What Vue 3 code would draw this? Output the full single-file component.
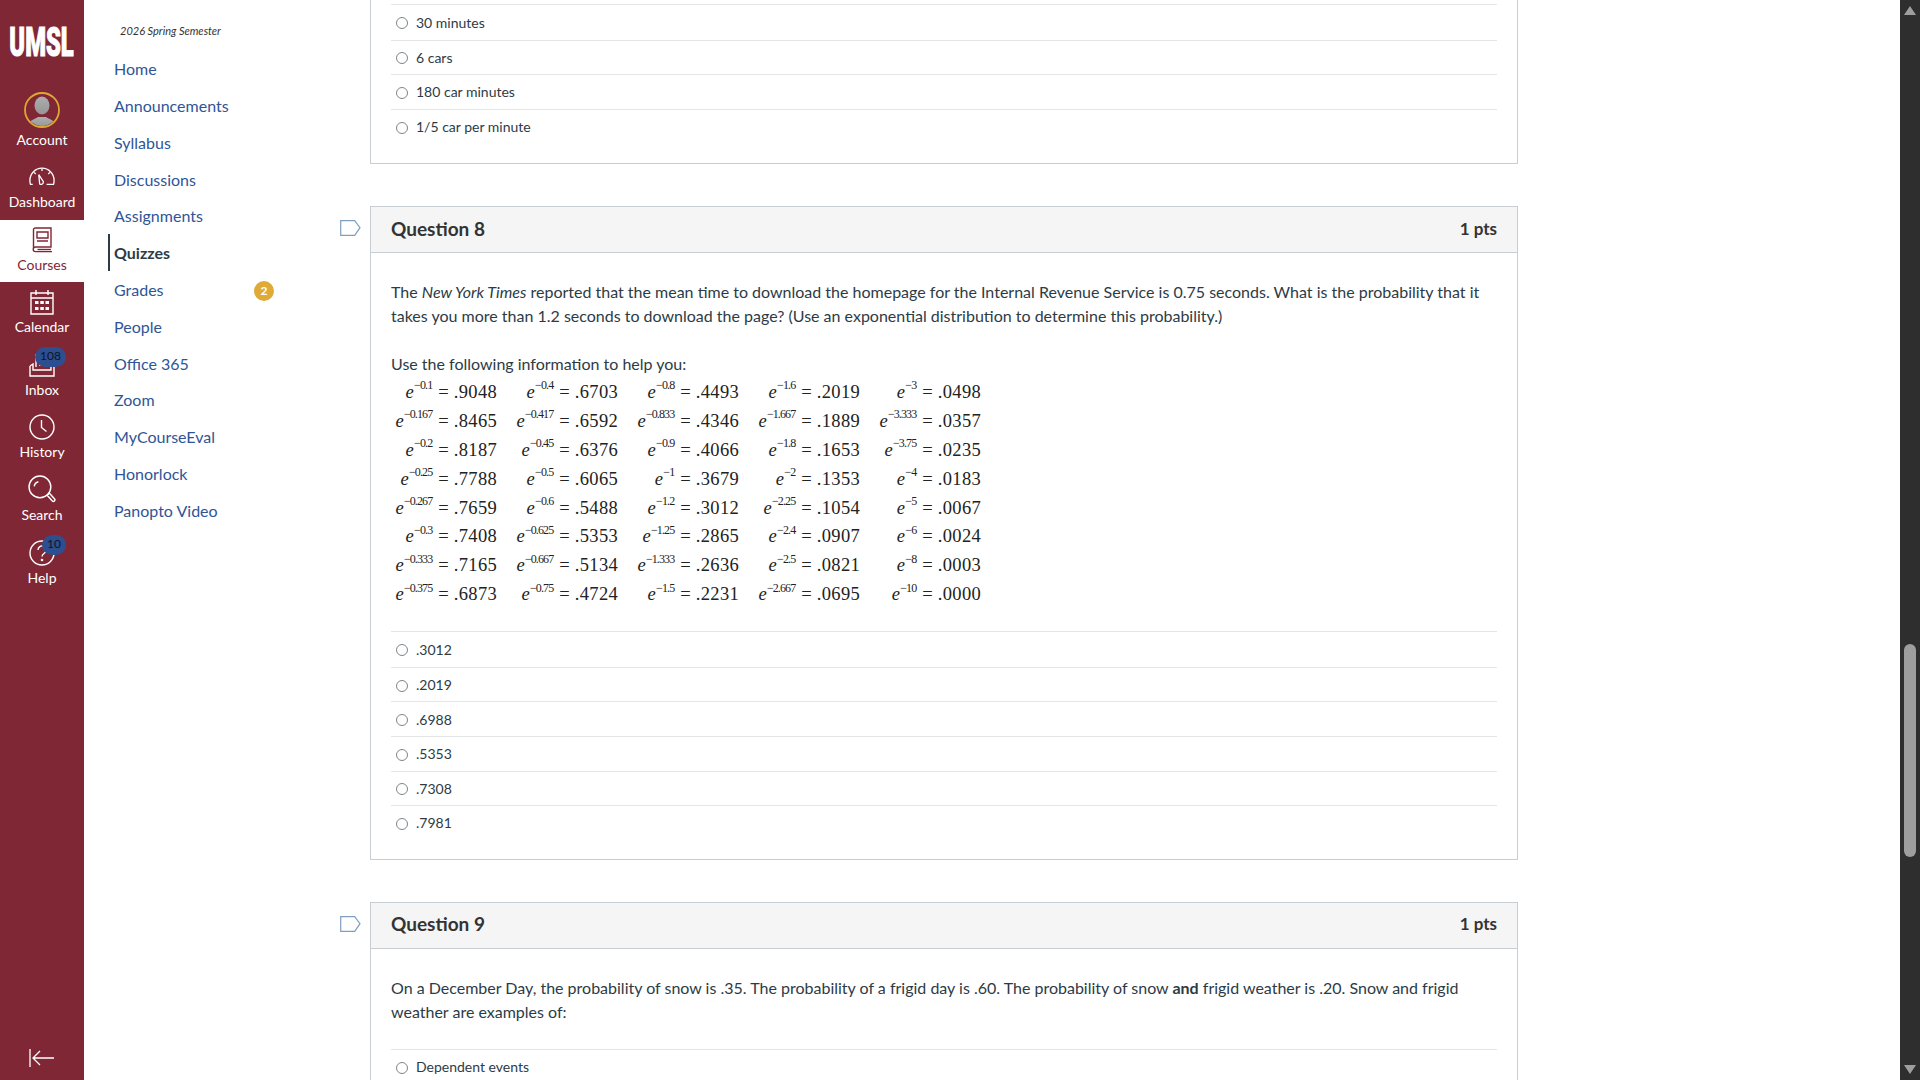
<script setup>
const rail = [
  { label: 'Account', icon: 'account' },
  { label: 'Dashboard', icon: 'dashboard' },
  { label: 'Courses', icon: 'courses', active: true },
  { label: 'Calendar', icon: 'calendar' },
  { label: 'Inbox', icon: 'inbox', badge: '108' },
  { label: 'History', icon: 'history' },
  { label: 'Search', icon: 'search' },
  { label: 'Help', icon: 'help', badge: '10' },
]
const nav = ['Home', 'Announcements', 'Syllabus', 'Discussions', 'Assignments', 'Quizzes', 'Grades', 'People', 'Office 365', 'Zoom', 'MyCourseEval', 'Honorlock', 'Panopto Video']
const q8Answers = ['.3012', '.2019', '.6988', '.5353', '.7308', '.7981']
const topAnswers = ['30 minutes', '6 cars', '180 car minutes', '1/5 car per minute']
const rows = [
  [['0.1', '.9048'], ['0.4', '.6703'], ['0.8', '.4493'], ['1.6', '.2019'], ['3', '.0498']],
  [['0.167', '.8465'], ['0.417', '.6592'], ['0.833', '.4346'], ['1.667', '.1889'], ['3.333', '.0357']],
  [['0.2', '.8187'], ['0.45', '.6376'], ['0.9', '.4066'], ['1.8', '.1653'], ['3.75', '.0235']],
  [['0.25', '.7788'], ['0.5', '.6065'], ['1', '.3679'], ['2', '.1353'], ['4', '.0183']],
  [['0.267', '.7659'], ['0.6', '.5488'], ['1.2', '.3012'], ['2.25', '.1054'], ['5', '.0067']],
  [['0.3', '.7408'], ['0.625', '.5353'], ['1.25', '.2865'], ['2.4', '.0907'], ['6', '.0024']],
  [['0.333', '.7165'], ['0.667', '.5134'], ['1.333', '.2636'], ['2.5', '.0821'], ['8', '.0003']],
  [['0.375', '.6873'], ['0.75', '.4724'], ['1.5', '.2231'], ['2.667', '.0695'], ['10', '.0000']],
]
const cells = rows.flat()
</script>

<template>
  <div class="app">
    <aside class="rail">
      <div class="logo"><span>UMSL</span></div>
      <a v-for="item in rail" :key="item.label" class="rail-item" :class="{ active: item.active }">
        <span class="rail-icon">
          <svg v-if="item.icon === 'account'" class="avatar" viewBox="0 0 36 36">
            <defs>
              <clipPath id="avc"><circle cx="18" cy="18" r="16" /></clipPath>
              <linearGradient id="avg" x1="0" y1="0" x2="0" y2="1"><stop offset="0" stop-color="#adadad" /><stop offset="1" stop-color="#969696" /></linearGradient>
            </defs>
            <g clip-path="url(#avc)" fill="url(#avg)">
              <ellipse cx="18" cy="13.500" rx="7.500" ry="9" />
              <path d="M2 36c1-7 9-9 12-11h8c3 2 11 4 12 11z" />
            </g>
            <circle cx="18" cy="18" r="17" fill="none" stroke="#dca834" stroke-width="1.800" />
          </svg>
          <svg v-else-if="item.icon === 'dashboard'" viewBox="0 0 28 22" class="ic">
            <path d="M4 19H1.600C1 17.700 1 16 1 14.500A13 13 0 0 1 27 14.500C27 16 27 17.700 26.400 19H19" />
            <path d="M10.500 8.500l5 7.500a2.600 2.600 0 0 1-4 2.500z" />
            <path d="M14 2v2.500M5.500 6l1.700 1.700M22.500 6l-1.700 1.700" />
          </svg>
          <svg v-else-if="item.icon === 'courses'" viewBox="0 0 24 26" class="ic">
            <path d="M3.500 21V2.800A1.800 1.800 0 0 1 5.300 1H21v19H5.500a2.300 2.300 0 0 0 0 4.600H22" />
            <path d="M7 5h11v6H7zM7 14h11" />
            <path d="M7.500 22.500H21" />
          </svg>
          <svg v-else-if="item.icon === 'calendar'" viewBox="0 0 24 26" class="ic">
            <path d="M1 4h22v21H1zM1 9h22M6 1v5M18 1v5" />
            <path class="solid" d="M5 12h3.500v3H5zM10.300 12h3.500v3h-3.500zM15.500 12H19v3h-3.500zM5 18h3.500v3H5zM10.300 18h3.500v3h-3.500zM15.500 18H19v3h-3.500z" />
          </svg>
          <svg v-else-if="item.icon === 'inbox'" viewBox="0 0 26 24" class="ic">
            <path d="M1 13v10h24V13l-3-2M1 13l3-2v6h18v-6" />
            <path d="M7 14V2h12v12M10 8h6M10 12h6" />
          </svg>
          <svg v-else-if="item.icon === 'history'" viewBox="0 0 26 26" class="ic">
            <circle cx="13" cy="13" r="12" />
            <path d="M12.500 6v7.500l5 4" />
          </svg>
          <svg v-else-if="item.icon === 'search'" viewBox="0 0 27 28" class="ic big">
            <circle cx="11.500" cy="11.500" r="10.500" />
            <path d="M18.500 19.500l2-2 5 5.500a1.400 1.400 0 0 1-2 2z" />
            <path d="M6 11a5.500 5.500 0 0 1 4-4.500" />
          </svg>
          <svg v-else viewBox="0 0 26 26" class="ic">
            <circle cx="13" cy="13" r="12" />
            <path d="M9 10a4 4 0 1 1 6.500 3c-1.500 1-2.500 2-2.500 3.500" />
            <circle class="solid" cx="13" cy="20" r="1.300" />
          </svg>
          <span v-if="item.badge" class="rail-badge" :class="'b' + item.badge">{{ item.badge }}</span>
        </span>
        <span class="rail-label">{{ item.label }}</span>
      </a>
      <div class="collapse">
        <svg viewBox="0 0 26 20" width="26" height="20">
          <path d="M1 1v18M25 10H4M11 3l-7 7 7 7" fill="none" stroke="#fff" stroke-width="1.300" />
        </svg>
      </div>
    </aside>

    <nav class="course-nav">
      <div class="semester">2026 Spring Semester</div>
      <ul>
        <li v-for="name in nav" :key="name" :class="{ current: name === 'Quizzes' }">
          <span>{{ name }}</span>
          <b v-if="name === 'Grades'" class="count">2</b>
        </li>
      </ul>
    </nav>

    <main class="main">
      <section class="q-row">
        <div class="card card-clipped">
          <div class="answers">
            <label v-for="a in topAnswers" :key="a" class="answer"><i class="radio"></i>{{ a }}</label>
          </div>
        </div>
      </section>

      <section class="q-row">
        <div class="tag-slot">
          <svg viewBox="0 0 21 16" width="21" height="16"><path d="M.7.7h14l5.300 7-5.300 7.600H.7z" fill="#fff" stroke="#7f9fc0" stroke-width="1.200" /></svg>
        </div>
        <div class="card">
          <header class="head"><h2>Question 8</h2><strong>1 pts</strong></header>
          <div class="body">
            <p>The <em>New York Times</em> reported that the mean time to download the homepage for the Internal Revenue Service is 0.75 seconds. What is the probability that it takes you more than 1.2 seconds to download the page? (Use an exponential distribution to determine this probability.)</p>
            <p class="use">Use the following information to help you:</p>
            <div class="table">
              <span v-for="c in cells" :key="c[0]" class="cell"><i>e</i><sup>−{{ c[0] }}</sup> = {{ c[1] }}</span>
            </div>
            <div class="answers">
              <label v-for="a in q8Answers" :key="a" class="answer"><i class="radio"></i>{{ a }}</label>
            </div>
          </div>
        </div>
      </section>

      <section class="q-row">
        <div class="tag-slot">
          <svg viewBox="0 0 21 16" width="21" height="16"><path d="M.7.7h14l5.300 7-5.300 7.600H.7z" fill="#fff" stroke="#7f9fc0" stroke-width="1.200" /></svg>
        </div>
        <div class="card">
          <header class="head"><h2>Question 9</h2><strong>1 pts</strong></header>
          <div class="body">
            <p>On a December Day, the probability of snow is .35. The probability of a frigid day is .60. The probability of snow <b>and</b> frigid weather is .20. Snow and frigid weather are examples of:</p>
            <div class="answers a9">
              <label class="answer"><i class="radio"></i>Dependent events</label>
            </div>
          </div>
        </div>
      </section>
    </main>

    <div class="scrollbar">
      <span class="arrow up"></span>
      <span class="thumb"></span>
      <span class="arrow down"></span>
    </div>
  </div>
</template>

<style>
html, body { margin: 0; overflow: hidden; }
</style>

<style scoped>
.app {
  display: flex;
  width: 1920px;
  height: 1080px;
  overflow: hidden;
  background: #fff;
  font-family: Lato, "Liberation Sans", sans-serif;
  color: #2d3b45;
}
.rail {
  width: 84px;
  flex: none;
  background: #802735;
  color: #fff;
  display: flex;
  flex-direction: column;
}
.logo {
  height: 94.500px;
  flex: none;
  display: flex;
  justify-content: center;
  align-items: flex-start;
  padding-top: 21px;
  box-sizing: border-box;
  overflow: hidden;
}
.logo span {
  font-family: Roboto, sans-serif;
  font-weight: 900;
  font-size: 41px;
  line-height: 43px;
  transform: scaleX(.58);
  -webkit-text-stroke: 1.100px #fff;
}
.rail-item {
  height: 62.600px;
  display: flex;
  flex-direction: column;
  align-items: center;
  flex: none;
}
.rail-item.active { background: #fff; color: #802735; }
.rail-icon {
  position: relative;
  height: 26px;
  margin-top: 7px;
  display: flex;
  align-items: center;
  justify-content: center;
}
.ic {
  width: 26px;
  height: 26px;
  fill: none;
  stroke: currentColor;
  stroke-width: 1.400;
}
.ic.big { width: 28px; height: 29px; margin-top: -1px; }
.ic .solid { fill: currentColor; stroke: none; }
.avatar { width: 36px; height: 36px; margin-top: -10px; }
.rail-label {
  font-size: 14px;
  line-height: 18px;
  margin-top: 3px;
}
.rail-badge {
  position: absolute;
  top: -5px;
  height: 20px;
  border-radius: 10px;
  background: #2d4f8f;
  color: #0c1526;
  font-size: 12px;
  line-height: 18px;
  text-align: center;
}
.b108 { left: 6px; width: 31px; }
.b10 { left: 13px; width: 24px; }
.collapse {
  margin-top: auto;
  height: 32px;
  flex: none;
  display: flex;
  justify-content: center;
}
.course-nav {
  width: 286px;
  flex: none;
  box-sizing: border-box;
  padding: 23px 0 0 24px;
}
.semester {
  font-style: italic;
  font-size: 11px;
  line-height: 16px;
  color: #333;
  margin-left: 12px;
  margin-bottom: 11.400px;
}
.course-nav ul { list-style: none; margin: 0; padding: 0; width: 166px; }
.course-nav li {
  height: 36.800px;
  display: flex;
  align-items: center;
  justify-content: space-between;
  font-size: 16px;
  color: #2f5597;
  padding-left: 4px;
  box-sizing: border-box;
  border-left: 2px solid transparent;
}
.course-nav li.current { color: #2d3b45; font-weight: 700; border-left-color: #2d3b45; }
.count {
  width: 20px;
  height: 20px;
  border-radius: 50%;
  background: #dfaa38;
  color: #fff;
  font-size: 12px;
  font-weight: 700;
  line-height: 20px;
  text-align: center;
  position: relative;
  top: 1px;
}
.main {
  width: 1148px;
  flex: none;
  display: flex;
  flex-direction: column;
}
.q-row { position: relative; margin-bottom: 42px; }
.tag-slot { position: absolute; left: -30px; top: 14px; }
.card { border: 1px solid #c7cdd1; box-sizing: border-box; }
.card-clipped { border-top: 0; padding: 4px 20px 0; height: 164px; }
.head {
  height: 46px;
  box-sizing: border-box;
  display: flex;
  align-items: center;
  justify-content: space-between;
  padding: 0 20px 3px;
  background: #f5f5f5;
  border-bottom: 1px solid #c7cdd1;
  color: #333;
}
.head h2 { margin: 0; font-size: 19px; font-weight: 700; }
.head strong { font-size: 17px; font-weight: 700; }
.body { padding: 27px 20px 0; }
.body p { margin: 0; font-size: 16px; line-height: 24px; }
.body .use { margin-top: 24px; }
.table {
  display: grid;
  grid-template-columns: repeat(5, 121px);
  grid-auto-rows: 28.900px;
  width: 605px;
  margin: 0 0 0 -15px;
  padding: 2px 0 0;
  font-family: "Liberation Serif", serif;
  font-size: 18.500px;
  line-height: 29px;
  color: #222;
}
.cell { justify-self: end; white-space: nowrap; letter-spacing: .3px; }
.cell sup {
  font-size: 12px;
  line-height: 0;
  letter-spacing: -.9px;
  vertical-align: super;
  margin-right: 1px;
  position: relative;
  top: -1.500px;
}
.answers { border-top: 1px solid #e3e5e7; }
.body .answers { margin-top: 22px; padding-bottom: 19px; }
.body .a9 { margin-top: 25px; }
.answer {
  height: 34.600px;
  display: flex;
  align-items: center;
  gap: 8px;
  font-size: 14px;
  padding-left: 5px;
  box-sizing: border-box;
  border-top: 1px solid #e3e5e7;
}
.answer:first-child { border-top: 0; }
.radio {
  width: 10px;
  height: 10px;
  border: 1px solid #7d858b;
  border-radius: 50%;
  background: #fff;
  flex: none;
  margin-top: 2px;
}
.scrollbar {
  position: absolute;
  left: 1900px;
  top: 0;
  width: 20px;
  height: 1080px;
  background: #2e2e2e;
}
.thumb {
  position: absolute;
  left: 4px;
  top: 644px;
  width: 12px;
  height: 213px;
  border-radius: 6px;
  background: #9e9e9e;
}
.arrow {
  position: absolute;
  left: 4px;
  width: 0;
  height: 0;
  border-left: 6px solid transparent;
  border-right: 6px solid transparent;
}
.up { top: 6px; border-bottom: 9px solid #9e9e9e; }
.down { bottom: 6px; border-top: 9px solid #9e9e9e; }
</style>
